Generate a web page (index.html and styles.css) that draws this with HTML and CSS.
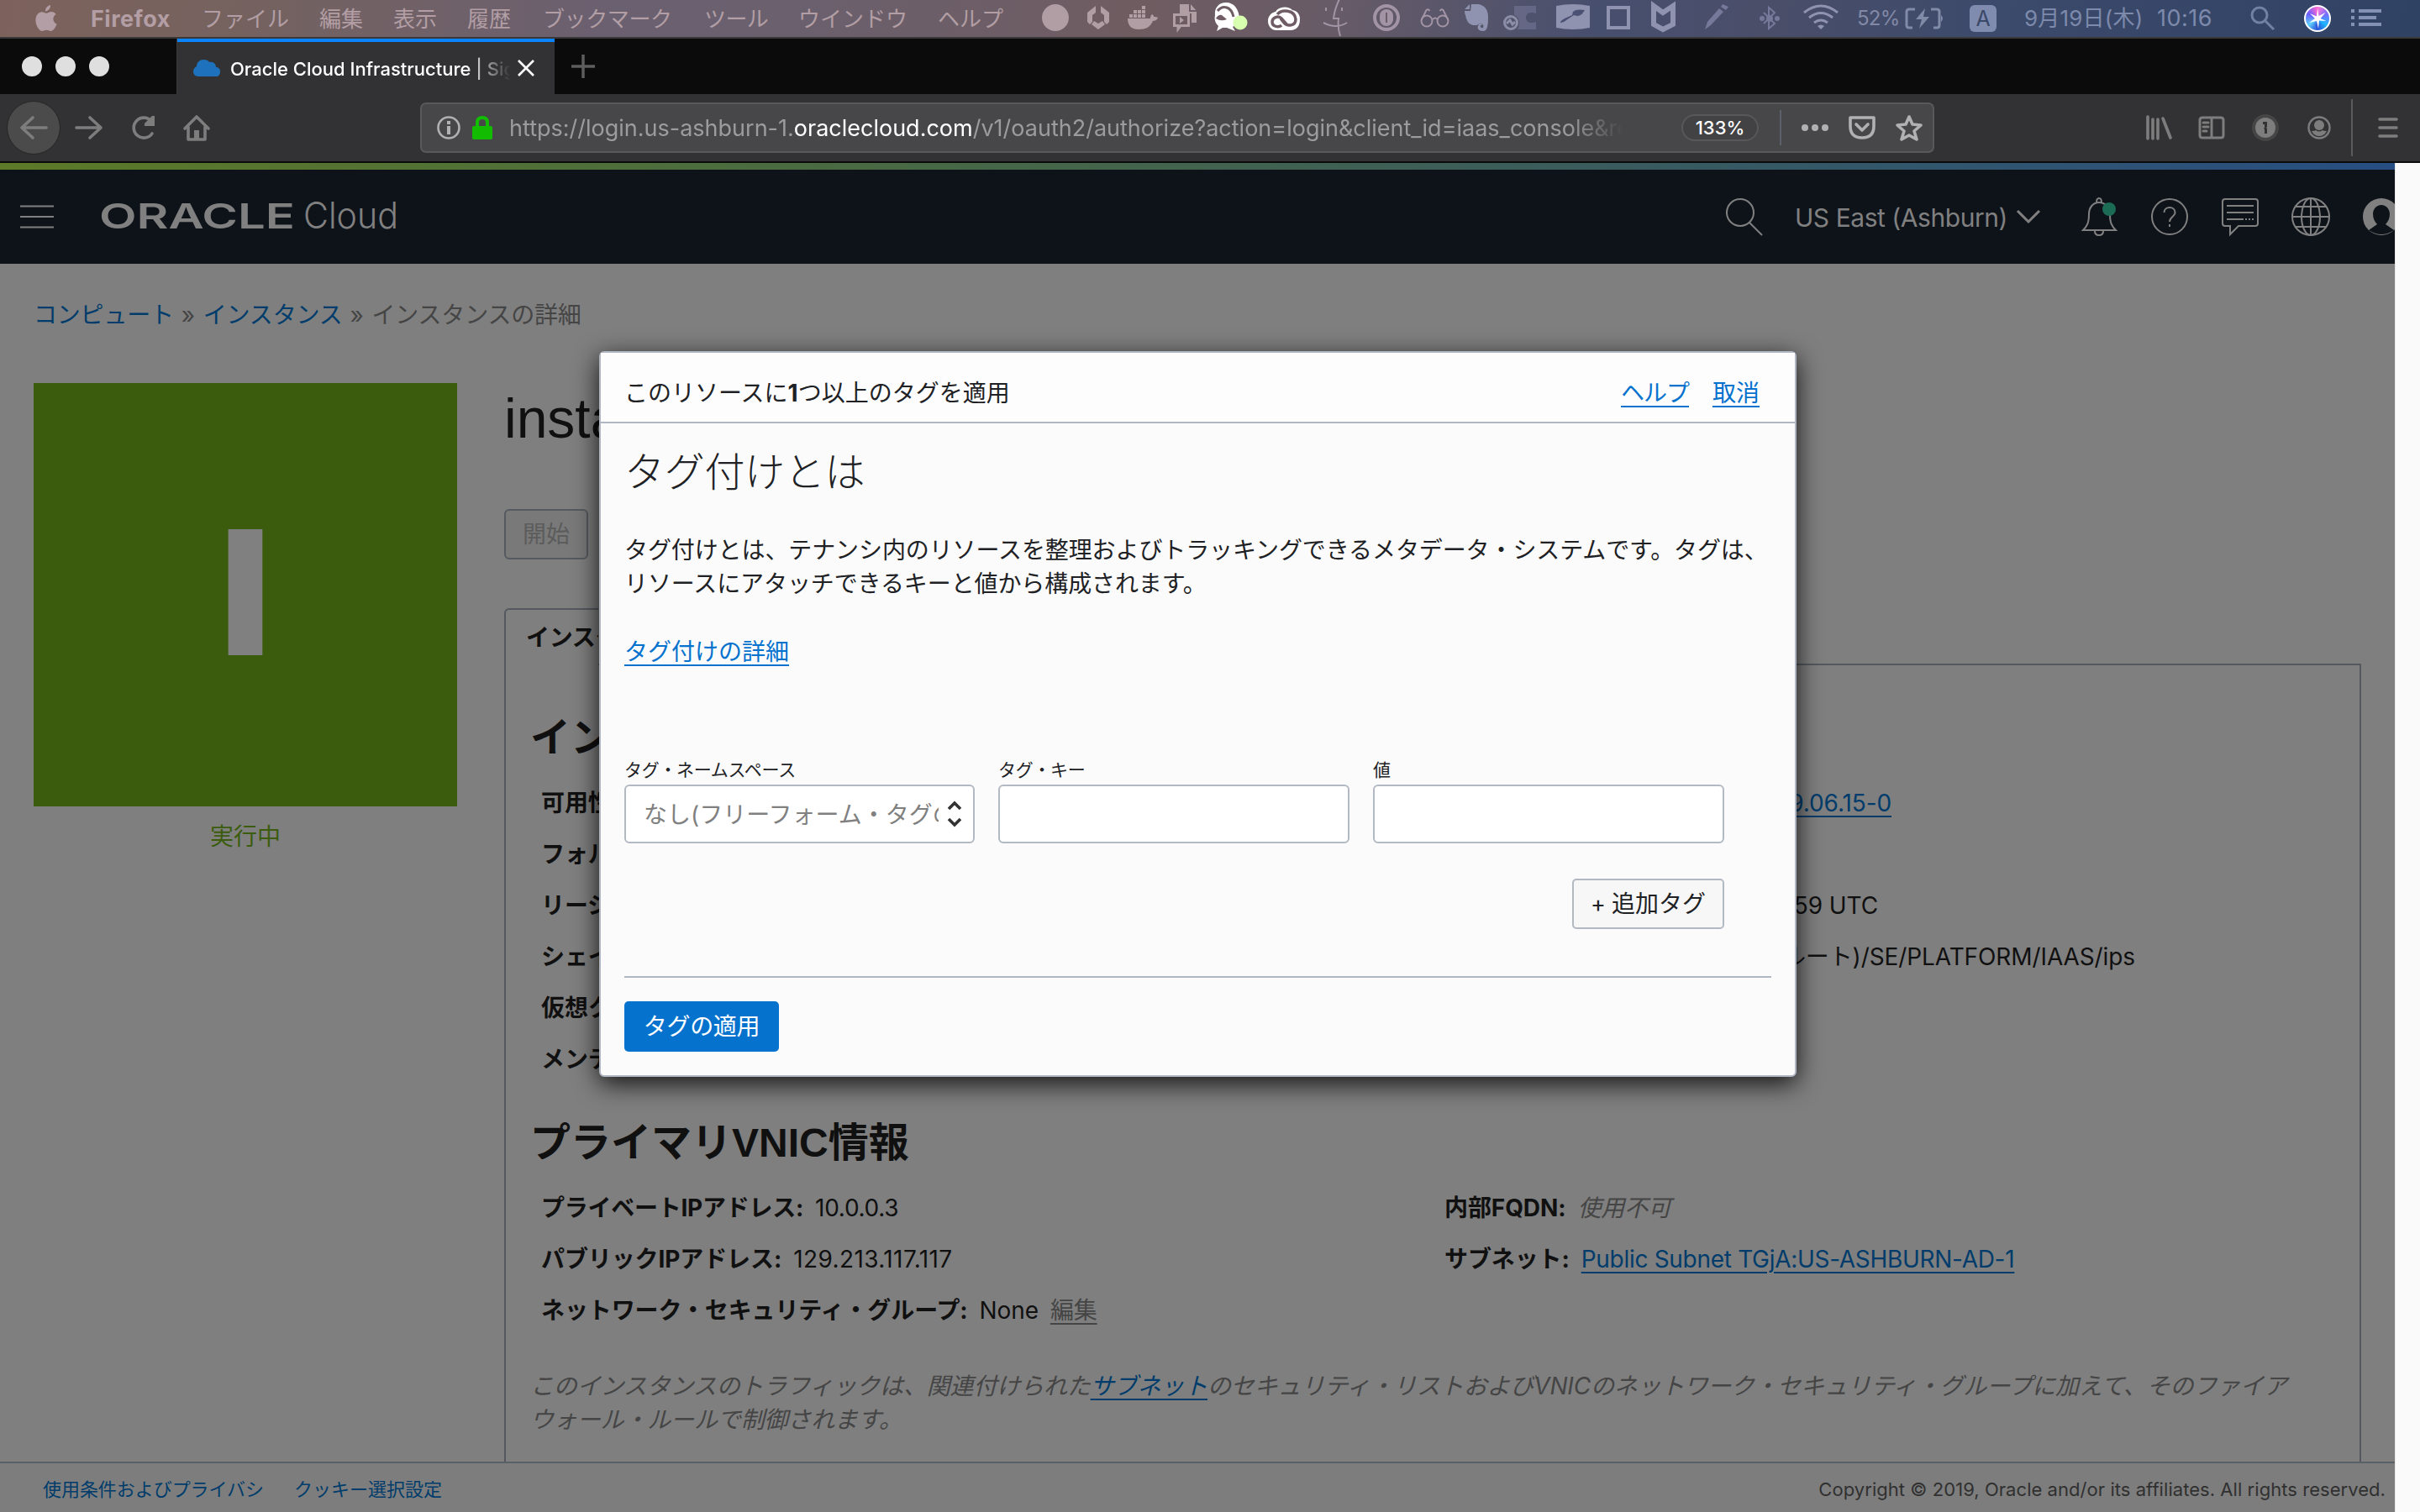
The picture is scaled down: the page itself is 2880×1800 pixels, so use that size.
FILE: index.html
```html
<!DOCTYPE html>
<html lang="ja">
<head>
<meta charset="utf-8">
<title>Oracle Cloud Infrastructure</title>
<link rel="stylesheet" href="styles.css">
</head>
<body>
<header class="menubar">
  <svg class="apple" viewBox="0 0 26 32"><path d="M18 0c.4 3.6-2.600 7.400-6 7.400C11.600 4 14.600.6 18 0zM13 9.800c1.600 0 3.400-1.800 6.200-1.800 2.200 0 4.200 1.200 5.400 3-4.800 2.800-4 9.600 1 11.600-1.200 3.600-4 8.400-7 8.400-2 0-2.800-1.200-5.200-1.200S10 31 8.200 31C4.400 31 .4 24 .4 18c0-6 3.600-9.800 7.400-9.800 2.400 0 4 1.600 5.200 1.600z"/></svg>
  <nav class="menus">
    <b class="m m-app">Firefox</b><span class="m m-file">ファイル</span><span class="m m-edit">編集</span><span class="m m-view">表示</span><span class="m m-hist">履歴</span><span class="m m-book">ブックマーク</span><span class="m m-tool">ツール</span><span class="m m-win">ウインドウ</span><span class="m m-help">ヘルプ</span>
  </nav>
  <div class="tray">
    <svg viewBox="0 0 46 46"><circle cx="20" cy="22" r="16"/></svg>
    <svg viewBox="0 0 50 46"><path d="M12 16l10-8v8l-4 3v8l-3 3-3-3zM38 16l-10-8v8l4 3v8l3 3 3-3zM25 36l-8-6 3-4 5 3 5-3 3 4z"/></svg>
    <svg viewBox="0 0 54 46"><path d="M10 23h27c0-3 1-4 2-5 2 1 2 2 2 3 2 0 4 0 5 1-1 3-4 4-6 4-3 7-8 10-17 10-8 0-13-4-13-13zM12 18h4v4h-4zM17 18h4v4h-4zM22 18h4v4h-4zM27 18h4v4h-4zM17 13h4v4h-4zM22 13h4v4h-4zM27 13h4v4h-4zM27 8h4v4h-4z"/></svg>
    <svg viewBox="0 0 48 46"><path d="M18 6h13l7 8v14h-6V17H18z"/><path class="cut" d="M30 6v8h8"/><path class="ln" d="M11.500 18.500h17v13H19l-3 4v-4h-4.500z"/><path d="M18 21l5 4-5 4z"/></svg>
    <svg class="lit" viewBox="0 0 64 46"><path d="M12 19C11 10 17 4 25 4c10 0 15 8 16 18-1 5-4 9-8 11l3 5-10-4h-5l-7 4 2-6c-4-4-5-8-4-13z"/><path class="dark" d="M15 14q5-6 11-4 6 2 8 11"/><path class="darkfill" d="M13 23q3-5 7-4l6 5q-7 3-13-1z"/><circle class="lime" cx="42" cy="28" r="8.500"/></svg>
    <svg class="lit" viewBox="0 0 62 46"><path d="M20 15c4-7 16-7 20-2 6 1 9 5 9 11 0 8-4 13-11 13H21c-6 0-10-5-10-11 0-6 4-10 9-11z"/><path class="dark2" d="M34 31l-7-8c-4-4-11-1-11 4 0 6 8 7 11 4M22 18c5-6 21-6 22 6 0 8-10 9-14 4l-4-5"/></svg>
    <svg viewBox="0 0 60 46"><path class="ln2" d="M34 0c-4 8-6 15-7 23h6c-1 8 0 15 2 21M18 10v4M37 10v4M15 28q15 8 28 0"/></svg>
    <svg viewBox="0 0 60 46"><circle class="ln4" cx="30" cy="22" r="14"/><rect x="22" y="12" width="16" height="20" rx="8"/><path class="cut" d="M30 16v12"/></svg>
    <svg viewBox="0 0 54 46"><circle class="ln2" cx="18" cy="26" r="6.500"/><circle class="ln2" cx="37" cy="26" r="6.500"/><path class="ln2" d="M25 24q3-3 6 0M11.500 25l6-12q2-2 4 1M43.500 25l-6-12q-2-2-4 1"/></svg>
    <svg viewBox="0 0 46 46"><path d="M17 6h8c8 1 12 7 12 15 0 11-1 17-6 17-6 0-8-4-5-8 1-2 4-1 4 1h-2c-1 2 1 4 3 3 1-3 0-4-2-5-3-1-4 3-8 2-5 0-9-2-11-12-1-2-1-4-1-5h7z"/><path d="M9 12l6-6v6z"/></svg>
    <svg class="faint" viewBox="0 0 60 46"><path d="M22 8h26v9c-9-3-12 1-12 5s4 8 12 5v9H26c4-7 2-15-4-17z" opacity=".55"/><circle class="ln4 ring2" cx="18" cy="28" r="7.500"/><path class="ln2 ring2" d="M13 29l4-4 3 5 3-3"/></svg>
    <svg viewBox="0 0 62 46"><path d="M12 8q20-4 40 0v26q-20 4-40 0z"/><path class="brush" d="M17 28c0-2 3-4 5-5l9-4 1-4c3-3 8-3 14-2-2 3-4 7-9 7l-4-1-9 6c-2 2-5 3-7 3z"/></svg>
    <svg viewBox="0 0 52 46"><path class="ln4s" d="M12 10h24v24H12z"/></svg>
    <svg viewBox="0 0 54 46"><path class="ln5" d="M14 8l11 8 12-8v22l-12 6-11-6z"/></svg>
    <svg class="faint" viewBox="0 0 72 46"><path d="M21 36l3-9 14-16 5 4-15 16zM40 9l2-3 7 3-3 4z"/></svg>
    <svg class="faint" viewBox="0 0 50 46"><path class="ln2" d="M19 16l13 13-7 6V10l7 6-13 13"/><circle cx="17" cy="23" r="3"/><circle cx="26" cy="23" r="4"/><circle cx="35" cy="23" r="3"/></svg>
    <svg viewBox="0 0 70 46"><path class="ln3" d="M17 16q20-16 40 0M23 22q14-11 28 0M29 28q8-6 16 0"/><path d="M33 32q4-3 8 0l-4 4z"/></svg>
  </div>
  <span class="batt">52%</span>
  <svg class="battery" viewBox="0 0 48 26"><path class="ln3" d="M12 2H5q-3 0-3 3v16q0 3 3 3h4M31 2h7q3 0 3 3v16q0 3-3 3h-4"/><path d="M24 1L13 14h7l-3 11 12-14h-7zM43 9q4 4 0 8z"/></svg>
  <span class="ime">A</span>
  <span class="date">9月19日(木)</span>
  <span class="time">10:16</span>
  <svg class="spot" viewBox="0 0 30 30"><circle class="ln3" cx="11" cy="11" r="9"/><path class="ln3" d="M18 18l10 10"/></svg>
  <span class="siri"><svg viewBox="0 0 28 28"><path d="M14 2l1.500 9 8-4-6 7 7 3-8.500-.5L15 26l-2-9-9 2 7-5-6-6 8 3.500z"/></svg></span>
  <svg class="list" viewBox="0 0 36 22"><path d="M0 0h4v4H0zM9 0h27v4H9zM0 8h4v4H0zM9 8h21v4H9zM0 16h4v4H0zM9 16h27v4H9z"/></svg>
</header>

<div class="tabs">
  <div class="lights"><i></i><i></i><i></i></div>
  <div class="tab">
    <svg class="cloud" viewBox="0 0 32 20"><path d="M6 20C2 20 0 17 0 14s2-5 4-6C4 3 8 0 12 0c4 0 6 1 7 3 5-1 8 2 8 6 3 0 5 2 5 5 0 4-2 6-5 6z"/></svg>
    <span class="tab-title">Oracle Cloud Infrastructure | Sig</span>
    <svg class="close" viewBox="0 0 20 20"><path d="M1 1l18 18M19 1L1 19"/></svg>
  </div>
  <svg class="plus" viewBox="0 0 28 28"><path d="M14 0v28M0 14h28"/></svg>
</div>

<div class="toolbar">
  <span class="back"><svg viewBox="0 0 32 28"><path d="M31 14H2M15 2L2 14l13 12"/></svg></span>
  <svg class="fwd" viewBox="0 0 32 28"><path d="M1 14h29M17 2l13 12-13 12"/></svg>
  <svg class="reload" viewBox="0 0 30 28"><path d="M25 21A12 12 0 1 1 24 6"/><path d="M28 0v12H16v-3l9-9z" class="fill"/></svg>
  <svg class="home" viewBox="0 0 32 32"><path d="M2 17L16 3l14 14M6 15v15h20V15"/><path class="fill" d="M13 19h6v11h-6z"/></svg>
  <div class="urlbar">
    <svg class="info" viewBox="0 0 28 28"><circle cx="14" cy="14" r="12.500"/><path class="fill" d="M12 6h4v4h-4zM12 12h4v10h-4z"/></svg>
    <svg class="lock" viewBox="0 0 24 28"><path d="M2 12h20q2 0 2 2v12q0 2-2 2H2q-2 0-2-2V14q0-2 2-2z"/><path class="shackle" d="M6 13V8q0-6 6-6t6 6v5"/></svg>
    <span class="url">https://login.us-ashburn-1.<span class="host">oraclecloud.com</span>/v1/oauth2/authorize?action=login&amp;client_id=iaas_console&amp;re</span>
    <span class="zoom">133%</span>
    <i class="usep"></i>
    <svg class="dots" viewBox="0 0 32 8"><circle cx="4" cy="4" r="4"/><circle cx="16" cy="4" r="4"/><circle cx="28" cy="4" r="4"/></svg>
    <svg class="pocket" viewBox="0 0 32 28"><path d="M2 2h28v10q0 14-14 14T2 12z"/><path d="M9 10l7 7 7-7"/></svg>
    <svg class="star" viewBox="0 0 32 32"><path d="M16 3l4 9 10 1-8 7 3 10-9-5-9 5 3-10-8-7 10-1z"/></svg>
  </div>
  <div class="tools">
    <svg class="lib" viewBox="0 0 32 28"><path d="M2 1v26M8 4v23M14 4v23M20 3l9 23"/></svg>
    <svg class="side" viewBox="0 0 32 28"><path d="M5 2h22q3 0 3 3v18q0 3-3 3H5q-3 0-3-3V5q0-3 3-3zM16 2v24M6 8h6M6 13h6M6 18h4"/></svg>
    <svg class="pass" viewBox="0 0 32 32"><circle class="ring" cx="16" cy="16" r="16"/><circle class="fill" cx="16" cy="16" r="12"/><path class="key" d="M13 9h5v6l-1 1 1 1v6h-3v-5l-1-1 1-1v-4h-2z"/></svg>
    <svg class="acct" viewBox="0 0 28 28"><circle cx="14" cy="14" r="12.500"/><circle class="fill" cx="14" cy="11" r="6"/><path class="fill" d="M5 18q4 0 5-1 4 3 8 0 1 1 5 1-3 6-9 6t-9-6z"/></svg>
    <i class="tsep"></i>
    <svg class="burger" viewBox="0 0 24 24"><path d="M2 2h20M2 12h20M2 22h20"/></svg>
  </div>
</div>

<div class="viewport">
<div class="page">
  <div class="stripe"></div>
  <div class="console">
    <svg class="menu" viewBox="0 0 40 28"><path d="M0 1.500h40M0 14h40M0 26.500h40"/></svg>
    <svg class="logo" viewBox="0 0 360 48"><text class="l1" x="-2" y="38" textLength="233" lengthAdjust="spacingAndGlyphs">ORACLE</text><text class="l2" x="241" y="38" textLength="113" lengthAdjust="spacingAndGlyphs">Cloud</text></svg>
    <svg class="search" viewBox="0 0 44 44"><circle cx="17" cy="17" r="16"/><path d="M28 29l15 15"/></svg>
    <span class="region">US East (Ashburn)</span>
    <svg class="chev" viewBox="0 0 28 16"><path d="M1 1l13 13L27 1"/></svg>
    <svg class="bell" viewBox="0 0 42 46"><path d="M1 39C6 34 8 30 8 20 8 12 13 6 20 6s13 6 13 14c0 10 2 14 7 19zM17 6q0-5 3-5t3 5M15 40q0 5 5 5t5-5"/><circle class="dot" cx="32" cy="14" r="8"/></svg>
    <svg class="help" viewBox="0 0 44 44"><circle cx="22" cy="22" r="21"/><path d="M15.500 17c0-8 13-8 13 0 0 5-6.500 5-6.500 11M22 31v3"/></svg>
    <svg class="chat" viewBox="0 0 44 44"><path d="M4 1h36q3 0 3 3v26q0 3-3 3H20L10 43V33H4q-3 0-3-3V4q0-3 3-3zM6 9h32M6 17h32M6 25h20M28 25h2M32 25h2M36 25h2"/></svg>
    <svg class="globe" viewBox="0 0 46 46"><circle cx="23" cy="23" r="22"/><ellipse cx="23" cy="23" rx="11" ry="22"/><path d="M23 1v44M1 23h44M5 11h36M5 35h36"/></svg>
    <svg class="user" viewBox="0 0 44 44"><circle class="fill" cx="22" cy="22" r="22"/><path class="cutout" d="M22 8c6 0 10 5 10 11 0 5-2 9-5 12l10 7q-15 10-30 0l10-7c-3-3-5-7-5-12 0-6 4-11 10-11z"/></svg>
  </div>

  <div class="body">
    <div class="crumbs"><a>コンピュート</a><i>»</i><a>インスタンス</a><i>»</i><span>インスタンスの詳細</span></div>
    <div class="main">
      <aside class="aside">
        <div class="badge"><b>I</b></div>
        <div class="state">実行中</div>
      </aside>
      <section class="detail">
        <h1>insta</h1>
        <span class="btn-start">開始</span>
        <div class="tabrow"><span class="ptab">インスタ</span></div>
        <div class="panel">
          <h2>インス</h2>
          <div class="rows">
            <div class="row"><b>可用性</b></div><div class="row r"><a class="v1">9.06.15-0</a></div>
            <div class="row"><b>フォル</b></div><div class="row"></div>
            <div class="row"><b>リージ</b></div><div class="row r"><span class="v2">59 UTC</span></div>
            <div class="row"><b>シェイ</b></div><div class="row r"><span class="v3">ルート)/SE/PLATFORM/IAAS/ips</span></div>
            <div class="row"><b>仮想ク</b></div><div class="row"></div>
            <div class="row"><b>メンテ</b></div><div class="row"></div>
          </div>
          <h2 class="vnic">プライマリVNIC情報</h2>
          <div class="rows">
            <div class="row"><b class="k1">プライベートIPアドレス:</b><span class="n1">10.0.0.3</span></div><div class="row"><b>内部FQDN:</b><em>使用不可</em></div>
            <div class="row"><b>パブリックIPアドレス:</b><span class="n2">129.213.117.117</span></div><div class="row"><b>サブネット:</b><a class="subnet">Public Subnet TGjA:US-ASHBURN-AD-1</a></div>
            <div class="row"><b>ネットワーク・セキュリティ・グループ:</b><span>None</span><u>編集</u></div><div class="row"></div>
          </div>
          <p class="note">このインスタンスのトラフィックは、関連付けられた<a>サブネット</a>のセキュリティ・リストおよびVNICのネットワーク・セキュリティ・グループに加えて、そのファイア<br>ウォール・ルールで制御されます。</p>
        </div>
      </section>
    </div>
  </div>
  <footer class="footer"><a class="f1">使用条件およびプライバシ</a><a class="f2">クッキー選択設定</a><span class="copy">Copyright © 2019, Oracle and/or its affiliates. All rights reserved.</span></footer>
</div>
<div class="scroll"></div>
</div>

<div class="modal">
  <div class="mhead"><span class="mtitle">このリソースに<b>1</b>つ以上のタグを適用</span><a class="mhelp">ヘルプ</a><a>取消</a></div>
  <div class="mbody">
    <h3>タグ付けとは</h3>
    <p>タグ付けとは、テナンシ内のリソースを整理およびトラッキングできるメタデータ・システムです。タグは、<br>リソースにアタッチできるキーと値から構成されます。</p>
    <a class="more">タグ付けの詳細</a>
    <div class="fields">
      <label>タグ・ネームスペース<span class="input select"><span class="sv">なし(フリーフォーム・タグの</span><svg viewBox="0 0 20 32"><path d="M3 10l7-7 7 7M3 22l7 7 7-7"/></svg></span></label>
      <label>タグ・キー<span class="input"></span></label>
      <label>値<span class="input"></span></label>
    </div>
    <div class="addrow"><span class="add"><i>+</i>追加タグ</span></div>
    <hr>
    <span class="apply">タグの適用</span>
  </div>
</div>
</body>
</html>
```
FILE: styles.css
```css
* { box-sizing: border-box; }
body {
  margin: 0; width: 2880px; height: 1800px; overflow: hidden;
  display: flex; flex-direction: column; position: relative;
  font-family: Inter, "Noto Sans CJK JP", sans-serif; font-size: 28px; line-height: 40px;
  background: #0b0b0b; color: #101010;
}
svg { display: block; flex: none; overflow: visible; }
span, b, a, i, em, u { white-space: nowrap; }
i { font-style: normal; }

/* macOS menu bar */
.menubar {
  height: 46px; flex: none; display: flex; align-items: center; position: relative;
  font-size: 26px; color: #b29ea4; border-bottom: 2px solid #3a3838;
  background: linear-gradient(100deg, #7d625c 0, #75625f 10%, #6b6070 25%, #6a606e 32%, #6f5c61 47%, #675b67 55%, #474f6e 66%, #4a4e69 73%, #3c4a6b 82%, #304264 100%);
}
.menubar svg { fill: currentColor; stroke: none; }
.apple { width: 26px; height: 32px; margin-left: 42px; }
.menus { display: flex; width: 1168px; padding: 2px 0 0 40px; line-height: 44px; flex: none; }
.m { flex: none; }
.m-app { width: 132px; font-weight: 700; font-size: 27px; letter-spacing: .5px; }
.m-file { width: 140px; }
.m-edit { width: 88px; }
.m-view { width: 88px; }
.m-hist { width: 90px; }
.m-book { width: 192px; letter-spacing: -.4px; }
.m-tool { width: 112px; letter-spacing: -.6px; }
.m-win { width: 166px; }
.tray { display: grid; flex: none; grid-template-columns: 46px 50px 54px 48px 64px 62px 60px 60px 54px 46px 60px 62px 52px 54px 72px 50px 70px; color: #a294a4; }
.tray svg { width: 100%; height: 46px; }
.tray svg:nth-child(-n+4) { color: #b09ea4; }
.tray svg:nth-child(n+10) { color: #8f93b0; }
.tray .lit { color: #fff !important; }
.tray .faint { color: #76799a !important; }
.ln, .ln2, .ln3, .ln4, .ln4s, .ln5, .cut, .dark, .dark2 { fill: none; stroke: currentColor; stroke-width: 3; }
.ln2 { stroke-width: 2; }
.ln4 { stroke-width: 4; }
.ln4s { stroke-width: 4; }
.ln5 { stroke-width: 6; }
.ring2 { stroke: #8c8ea8; stroke-width: 3; }
.cut { stroke: #6c5d68; stroke-width: 2; }
.dark { stroke: #6f5c64; stroke-width: 3; }
.darkfill { fill: #6f5c64; }
.dark2 { stroke: #6f5c64; stroke-width: 3.5; }
.lime { fill: #d8ffb0; }
.brush { fill: #4b5172; }
.batt { width: 68px; margin-left: 10px; font-size: 24px; line-height: 44px; color: #8189a6; letter-spacing: -.8px; }
.batt, .date, .time { flex: none; }
.battery { width: 48px; height: 26px; color: #808ba8; margin-left: -11px; }
.ime { width: 32px; height: 32px; border-radius: 6px; background: #7f8cb0; color: #3a4868; line-height: 32px; text-align: center; margin-left: 29px; font-size: 25px; flex: none; }
.date { width: 158px; margin-left: 33px; color: #7d8aac; line-height: 44px; letter-spacing: .2px; }
.time { width: 111px; color: #7d8aac; line-height: 44px; font-size: 27px; letter-spacing: .5px; }
.spot { width: 30px; height: 30px; color: #7181a3; }
.siri { width: 32px; height: 32px; border-radius: 50%; border: 2px solid #fff; margin-left: 34px; flex: none;
  background: conic-gradient(#ff7ad8, #7a6cff, #1fb8ff 35%, #2a50d8, #5fd0ff 65%, #6a5cff, #ff6ad0); }
.siri svg { width: 28px; height: 28px; fill: #fff; }
.list { width: 36px; height: 22px; margin-left: 24px; color: #8391b5; }

/* tab strip */
.tabs { height: 66px; flex: none; display: flex; background: #0b0b0b; }
.lights { width: 211px; display: flex; padding: 21px 0 0 26px; gap: 16px; border-right: 1px solid #3a3a3a; }
.lights i { width: 24px; height: 24px; border-radius: 50%; background: #dfdfdf; }
.tab { width: 449px; background: #323234; border-top: 4px solid #0a84ff; display: flex; align-items: center; padding: 0 23px 0 19px; }
.cloud { width: 32px; height: 20px; fill: #1e72bd; }
.tab-title { margin-left: 12px; width: 334px; overflow: hidden; font-size: 22px; font-weight: 500; color: #fff; line-height: 32px; margin-right: 8px; padding-top: 1px;
  -webkit-mask-image: linear-gradient(90deg, #000 84%, transparent 100%); mask-image: linear-gradient(90deg, #000 84%, transparent 100%); }
.close { width: 20px; height: 20px; stroke: #fff; stroke-width: 2.6; fill: none; }
.plus { width: 28px; height: 28px; stroke: #5e5e5e; stroke-width: 3.5; margin: 19px 0 0 20px; }

/* toolbar */
.toolbar { height: 82px; flex: none; background: #323234; border-bottom: 2px solid #0b0b0b; display: flex; align-items: center; }
.toolbar svg { stroke: #7d7d7d; stroke-width: 3.6; fill: none; stroke-linecap: round; stroke-linejoin: round; }
.toolbar .fill { fill: #7d7d7d; stroke: none; }
.back { width: 64px; height: 64px; border-radius: 50%; background: #4b4b4b; border: 1px solid #262626; margin-left: 8px; display: flex; align-items: center; justify-content: center; }
.back svg, .fwd { width: 32px; height: 28px; }
.fwd { margin-left: 18px; }
.reload { width: 30px; height: 28px; margin-left: 34px; }
.home { width: 32px; height: 32px; margin-left: 32px; }
.urlbar { width: 1802px; height: 60px; margin-left: 250px; background: #474749; border: 2px solid #59595b; border-radius: 7px; display: flex; align-items: center; padding-left: 18px; flex: none; }
.urlbar svg { stroke: #b1b1b3; }
.info { width: 28px; height: 28px; }
.toolbar .info { stroke-width: 2.6; }
.toolbar .info .fill { fill: #b1b1b3; }
.toolbar .lock { width: 24px; height: 28px; margin-left: 14px; fill: #12bc00; stroke: none; }
.lock .shackle { fill: none; stroke: #12bc00; stroke-width: 4; }
.url { margin-left: 20px; width: 1326px; overflow: hidden; color: #9c9c9e; font-size: 27px; line-height: 44px; padding-top: 2px;
  -webkit-mask-image: linear-gradient(90deg, #000 95%, transparent 100%); mask-image: linear-gradient(90deg, #000 95%, transparent 100%); }
.host { color: #fff; }
.zoom { width: 92px; height: 32px; border: 2px solid #58585a; border-radius: 16px; font-size: 22px; line-height: 29px; text-align: center; color: #fff; font-weight: 500; margin-left: 69px; background: #424244; }
.usep { width: 2px; height: 42px; background: #5c6068; margin-left: 25px; }
.toolbar .dots { width: 32px; height: 8px; margin-left: 24px; fill: #b1b1b3; stroke: none; }
.toolbar .pocket, .toolbar .star { stroke: #b1b1b3; }
.pocket { width: 32px; height: 28px; margin-left: 24px; }
.star { width: 32px; height: 32px; margin-left: 24px; }
.tools { display: flex; align-items: center; margin-left: 252px; }
.lib { width: 32px; height: 28px; }
.side { width: 32px; height: 28px; margin-left: 30px; }
.toolbar .side { stroke-width: 3; }
.pass { width: 32px; height: 32px; margin-left: 32px; }
.toolbar .ring { fill: #454545; stroke: none; }
.toolbar .key { fill: #323234; stroke: none; }
.acct { width: 28px; height: 28px; margin-left: 34px; }
.toolbar .acct { stroke-width: 2.4; }
.tsep { width: 2px; height: 68px; background: #5a5a5b; margin-left: 24px; }
.burger { width: 24px; height: 24px; margin-left: 30px; }

/* console page */
.viewport { flex: 1; display: flex; min-height: 0; }
.scroll { width: 30px; background: #fafafa; border-left: 1px solid #e8e8e8; }
.page { width: 2850px; background: #7f7f7f; display: flex; flex-direction: column; overflow: hidden; }
.stripe { height: 8px; flex: none; background: linear-gradient(90deg, #5c7a27, #4a6b40 33%, #3a5c5c 66%, #274e82); }
.console { height: 112px; flex: none; background: #0e131a; display: flex; align-items: center; padding-left: 24px; color: #808080; }
.console svg { stroke: #808080; stroke-width: 2; fill: none; }
.menu { width: 40px; height: 28px; }
.logo { width: 360px; height: 48px; margin-left: 56px; }
.logo text { fill: #808080; stroke: none; }
.l1 { font-size: 41px; font-weight: 600; }
.l2 { font-size: 43px; font-weight: 300; }
.search { width: 44px; height: 44px; margin-left: 1574px; }
.region { font-size: 30px; width: 252px; margin-left: 38px; line-height: 44px; padding-top: 2px; letter-spacing: -.45px; }
.chev { width: 28px; height: 16px; margin-left: 12px; }
.console .chev { stroke-width: 3; }
.bell { width: 42px; height: 46px; margin-left: 50px; }
.bell .dot { fill: #1c6b55; stroke: none; }
.help { width: 44px; height: 44px; margin-left: 40px; }
.chat { width: 44px; height: 44px; margin-left: 40px; }
.globe { width: 46px; height: 46px; margin-left: 39px; }
.user { width: 44px; height: 44px; margin-left: 39px; }
.user .fill { fill: #808080; stroke: none; }
.user .cutout { fill: #0e131a; stroke: none; }

.body { flex: 1; min-height: 0; overflow: hidden; padding: 41px 40px 0; }
.crumbs { display: flex; gap: 9px; color: #454545; letter-spacing: -.2px; }
.crumbs i { width: 17px; }
a { color: #003c6b; }
.main { display: flex; gap: 56px; padding-top: 61px; }
.aside { width: 504px; flex: none; }
.badge { height: 504px; background: #3b5c0d; display: flex; align-items: center; justify-content: center; color: #808080; padding-bottom: 6px; }
.badge b { font-size: 206px; line-height: 206px; font-weight: 900; }
.state { text-align: center; color: #3b5c0d; padding-top: 16px; }
.detail { width: 2210px; }
h1 { font: 400 66px/80px "Liberation Sans", sans-serif; margin: 2px 0 0; }
.btn-start { display: block; width: 100px; height: 60px; border: 2px solid #555a60; border-radius: 6px; background: #797979; color: #5c5c5c; text-align: center; line-height: 57px; margin-top: 68px; }
.tabrow { height: 66px; margin-top: 58px; }
.ptab { display: block; width: 112px; height: 68px; position: relative; border: 2px solid #55595f; border-bottom: 0; border-right: 0; border-radius: 6px 0 0 0; background: #7f7f7f; font-weight: 700; padding: 13px 0 13px 24px; overflow: hidden; letter-spacing: -.3px; }
.panel { border: 2px solid #55595f; border-bottom: 0; height: 1000px; padding: 57px 29px 0; }
h2 { font: 700 48px/60px "Liberation Sans", "Noto Sans CJK JP", sans-serif; margin: 0; }
.rows { display: grid; grid-template-columns: 1075px 1fr; grid-auto-rows: 61px; padding: 16px 0 0 13px; }
.row { display: flex; align-items: center; gap: 14px; letter-spacing: -.1px; }
.v1 { width: 532px; } .v2 { width: 516px; } .v3 { width: 822px; }
.r span, .r a { text-align: right; }
.k1 { letter-spacing: -.25px; }
.n1 { letter-spacing: -.3px; }
.n2 { letter-spacing: .4px; }
.subnet { letter-spacing: -.3px; }
.subnet, .v1, .more, .mhead a, .note a, u { text-decoration: underline; text-decoration-thickness: 2px; text-underline-offset: 5px; }
.vnic { margin-top: 40px; }
em, u { color: #454545; }
.note { margin: 40px 0 0; font-style: italic; color: #454545; line-height: 40px; letter-spacing: -.15px; white-space: nowrap; }
.footer { height: 60px; flex: none; border-top: 2px solid #596066; background: #7d7d7d; display: flex; align-items: center; padding: 4px 11px 0 51px; font-size: 22px; color: #303030; }
.f1 { letter-spacing: -.05px; }
.f2 { margin-left: 36px; }
.copy { margin-left: auto; letter-spacing: .05px; }

/* tag dialog */
.modal { position: absolute; z-index: 2; left: 713px; top: 418px; width: 1425px; height: 864px; background: #fbfbfb; border: 2px solid #b0b6c2; border-radius: 6px; box-shadow: 0 8px 30px rgba(0,0,0,.85); color: #202124; }
.modal a { color: #0572ce; }
.mhead { height: 84px; border-bottom: 2px solid #b0b6c2; display: flex; align-items: center; padding: 14px 42px 0 28px; background: #fdfdfd; gap: 28px; }
.mtitle { margin-right: auto; font-weight: 400; }
.mhelp { letter-spacing: -1px; }
.mbody { padding: 28px 28px 0; }
h3 { font-size: 48px; line-height: 60px; font-weight: 300; margin: 0; letter-spacing: -.3px; }
.mbody p { margin: 43px 0 41px; letter-spacing: -.1px; white-space: nowrap; }
.more { display: block; width: 196px; }
.modal .more, .mhead a { text-decoration-thickness: 1.5px; }
.fields { display: grid; grid-template-columns: 417px 418px 418px; gap: 28px; padding-top: 104px; font-size: 21px; line-height: 34px; letter-spacing: -.3px; }
label { display: block; }
.input { display: flex; height: 70px; border: 2px solid #b2b9c3; border-radius: 6px; background: #fff; align-items: center; font-size: 28px; letter-spacing: 0; }
.select { padding-left: 21px; color: #808080; }
.sv { width: 351px; overflow: hidden; margin-right: 9px; line-height: 42px; padding-top: 1px; }
.select svg { width: 20px; height: 32px; fill: none; stroke: #333; stroke-width: 3.6; }
.addrow { display: flex; justify-content: flex-end; padding: 42px 56px 0 0; }
.add { width: 181px; height: 60px; border: 2px solid #b2b9c3; border-radius: 5px; background: #f7f7f7; line-height: 57px; display: flex; gap: 7px; justify-content: center; }
.add i { font-size: 27px; }
hr { border: 0; height: 2px; background: #b0b6c2; margin: 56px 0 28px; }
.apply { display: block; width: 184px; height: 60px; border-radius: 5px; background: #0572ce; color: #fff; text-align: center; line-height: 60px; letter-spacing: -.3px; }
```
